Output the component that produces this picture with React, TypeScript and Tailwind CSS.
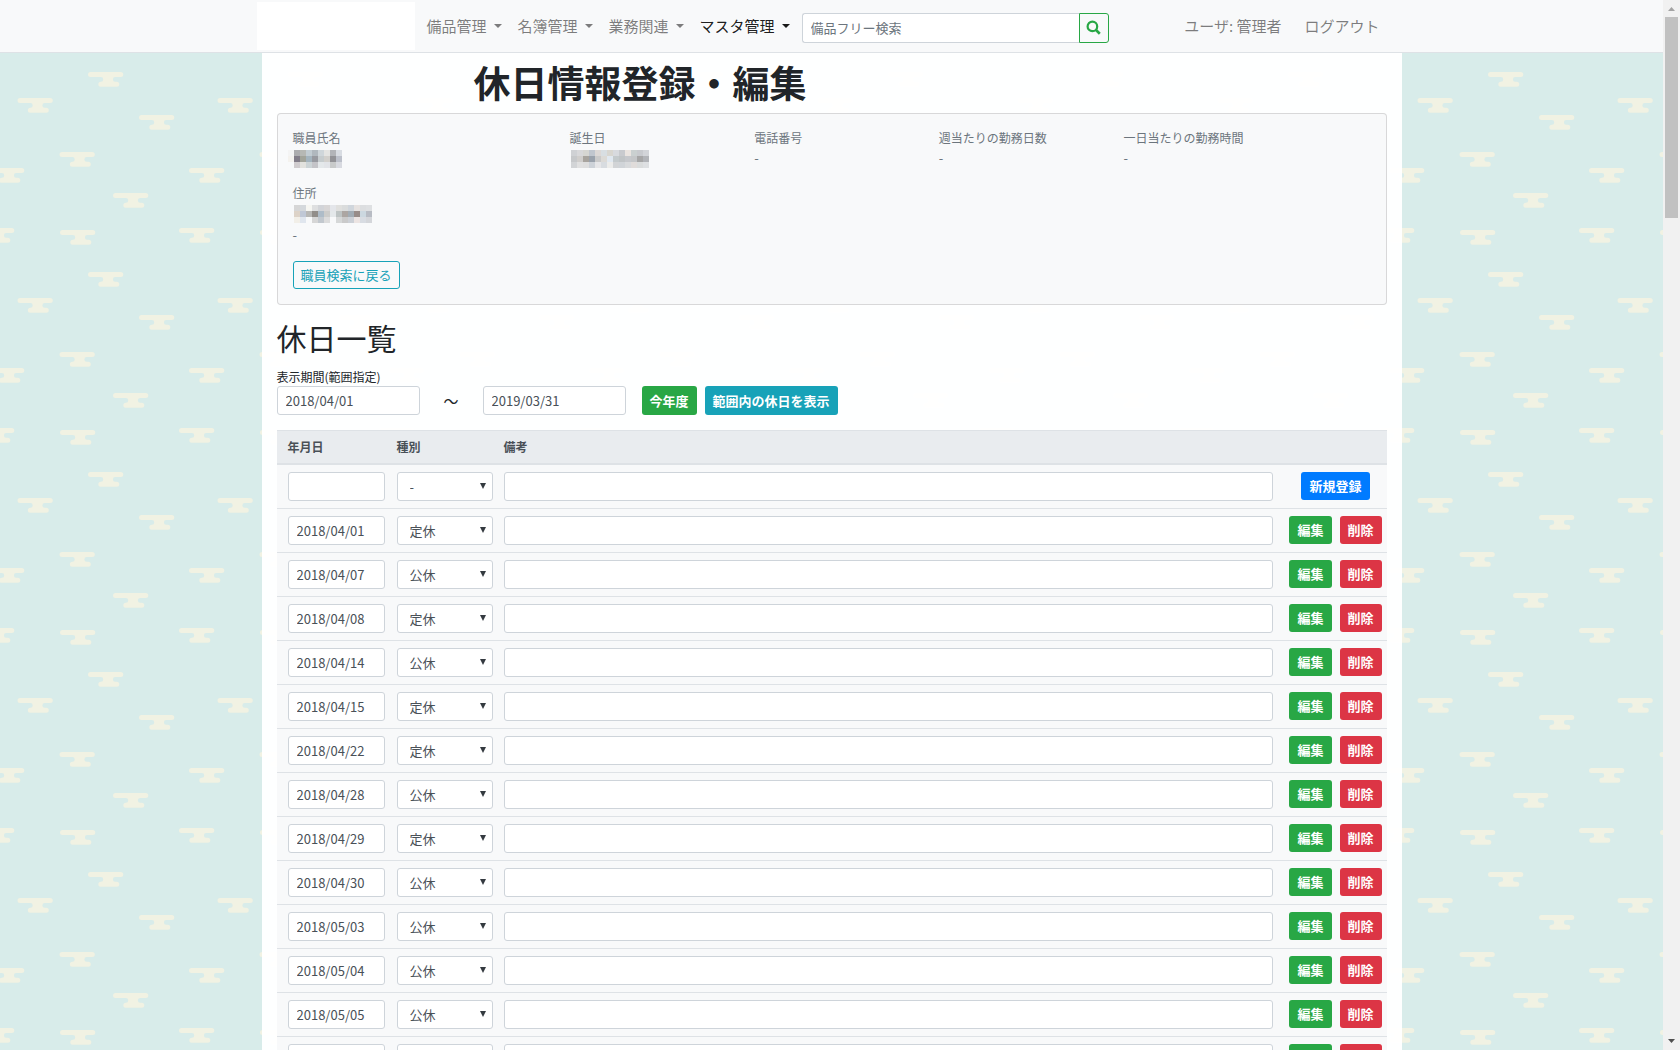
import type { ReactNode } from "react";

const clouds = [
  [88, 72],
  [17.5, 98],
  [139, 115],
  [59.5, 152],
  [189, 168],
  [-11, 168],
  [113, 193],
  [113, -7],
  [60, 30],
  [179, 28],
  [-21, 28],
];

const nameMosaic = [
  ["#f4f4f4", "#acacae", "#b6b8b4", "#c2ccd2", "#b0b8be", "#cfd6da", "#e4e4e2", "#b2b4b8", "#d8dce2"],
  ["#f4f2ee", "#827d88", "#a2a49a", "#a4b4be", "#989aa0", "#c6ccce", "#d2d0cc", "#929296", "#bcc0ca"],
  ["", "#d0ccce", "#e2e2de", "#ccd4d6", "#c4c4c8", "#e4e8ea", "#e2e4e8", "#c8caca", "#d8dae0"],
];

const birthMosaic = [
  ["#cfd1d4", "#d8d8da", "#d6d6d2", "#c0c6ce", "#dcd8d6", "#d8dee2", "#d8d6d0", "#d8dade", "#c8cace", "#eae4e0", "#cad0d0", "#c8cace", "#d2d4d8"],
  ["#c6c8ca", "#d0cecc", "#a8a49e", "#9aa2ac", "#cacaca", "#dcdad6", "#e0e8f0", "#c4cacc", "#c0c4c6", "#c6c8cc", "#c4c6c8", "#a6a6a6", "#b2b4b8"],
  ["#d2d4d6", "#e0e0e0", "#dedede", "#cdd2d8", "#e6e6e8", "#d8dce0", "#ececea", "#d2d4d6", "#d0d4d8", "#d8dadc", "#e0dcda", "#dadcdc", "#dee0e2"],
];

const addressMosaic = [
  ["#d6d6d6", "#d4d8dc", "#f6f6f2", "#dedfe0", "#d2d4d8", "#d8d6d6", "#e4e6ea", "#e0e0de", "#dadcdc", "#d0d6dc", "#e6e2e0", "#dcdee0", "#dee0e2"],
  ["#ddd3c8", "#c0c8d6", "#b8b8b6", "#928e8a", "#aebcc8", "#ccccca", "#e4e8ea", "#bec4c4", "#aca6a2", "#a2acb4", "#988c88", "#ccd8e0", "#b8bcc4"],
  ["#f2efe8", "#e0e6ee", "", "#d6d6d6", "#c2c8ce", "#dcdcdc", "", "#d6d8d8", "#cacaca", "#ccd0d6", "#ece4e2", "#d8dce2", "#d4d6da"],
];

const holidays = [
  { date: "2018/04/01", type: "定休" },
  { date: "2018/04/07", type: "公休" },
  { date: "2018/04/08", type: "定休" },
  { date: "2018/04/14", type: "公休" },
  { date: "2018/04/15", type: "定休" },
  { date: "2018/04/22", type: "定休" },
  { date: "2018/04/28", type: "公休" },
  { date: "2018/04/29", type: "定休" },
  { date: "2018/04/30", type: "公休" },
  { date: "2018/05/03", type: "公休" },
  { date: "2018/05/04", type: "公休" },
  { date: "2018/05/05", type: "公休" },
  { date: "2018/05/06", type: "定休" },
];

const fieldClass =
  "block w-full h-[29px] rounded-[3px] border border-[#ced4da] bg-white px-2 text-[13px] text-[#495057]";

function Background() {
  return (
    <svg className="absolute inset-0 w-full h-full" aria-hidden="true">
      <defs>
        <pattern id="clouds" width="200" height="200" patternUnits="userSpaceOnUse">
          <rect width="200" height="200" fill="#d8ecea" />
          {clouds.map(([x, y]) => (
            <path
              key={`${x}-${y}`}
              transform={`translate(${x} ${y})`}
              fill="#f1f2e3"
              d="M2.5 0h30.3a2.5 2.5 0 0 1 0 5h-5.5a2.4 2.4 0 0 0 0 4.8h1.5a2.5 2.5 0 0 1 0 5h-16a2.5 2.5 0 0 1 0-5h0a2.4 2.4 0 0 0 0-4.8h-10.3a2.5 2.5 0 0 1 0-5z"
            />
          ))}
        </pattern>
      </defs>
      <rect width="100%" height="100%" fill="url(#clouds)" />
    </svg>
  );
}

function NavMenu({ label, active }: { label: string; active?: boolean }) {
  return (
    <button
      type="button"
      className={`flex items-center gap-[7px] px-2 cursor-pointer ${
        active ? "text-black/90" : "text-black/50"
      }`}
    >
      {label}
      <span className="border-x-[4px] border-t-[4px] border-x-transparent border-t-current"></span>
    </button>
  );
}

function Mosaic({ rows, indent = 0 }: { rows: string[][]; indent?: number }) {
  return (
    <svg
      className="block mt-[3px] ml-px overflow-visible"
      width={rows[0].length * 6 - indent}
      height="18"
      shapeRendering="crispEdges"
      aria-hidden="true"
    >
      {rows.map((row, y) =>
        row.map((color, x) =>
          color ? (
            <rect key={`${x}-${y}`} x={x * 6 - indent} y={y * 6} width="6" height="6" fill={color} />
          ) : null
        )
      )}
    </svg>
  );
}

function Info({ label, className, children }: { label: string; className: string; children: ReactNode }) {
  return (
    <div className={`px-[15px] mb-4 ${className}`}>
      <div className="text-xs leading-[18px]">{label}</div>
      <div className="flow-root h-[21px] text-[13px] leading-[21px]">{children}</div>
    </div>
  );
}

function TypeSelect({ value }: { value: string }) {
  return (
    <div className="relative">
      <select
        aria-label="種別"
        defaultValue={value}
        className="block w-full h-[29px] appearance-none rounded-[3px] border border-[#ced4da] bg-white pl-3 text-[13px] text-[#495057]"
      >
        <option>-</option>
        <option>定休</option>
        <option>公休</option>
      </select>
      <svg
        className="absolute right-[7px] top-[11px] pointer-events-none"
        width="6"
        height="6"
        viewBox="0 0 6 6"
        fill="#343a40"
      >
        <path d="M0 0h6L3 6z" />
      </svg>
    </div>
  );
}

function Button({ className, children }: { className: string; children: ReactNode }) {
  return (
    <button
      type="button"
      className={`px-2 rounded-[3px] text-[13px] font-bold text-white whitespace-nowrap cursor-pointer ${className}`}
    >
      {children}
    </button>
  );
}

function Row({ date, type, children }: { date: string; type: string; children: ReactNode }) {
  return (
    <tr className="bg-[#f8f9fa]">
      <td className="py-[7px] pl-[11px] pr-[6px]">
        <input type="text" aria-label="年月日" defaultValue={date} className={fieldClass} />
      </td>
      <td className="py-[7px] px-[6px]">
        <TypeSelect value={type} />
      </td>
      <td className="py-[7px] pl-[5px] pr-[6px]">
        <input type="text" aria-label="備考" className={fieldClass} />
      </td>
      <td className="py-[7px] pl-[10px] pr-1">
        <div className="flex h-[29px] items-start justify-center gap-2">{children}</div>
      </td>
    </tr>
  );
}

function Navbar() {
  return (
    <header className="relative z-10 shrink-0 bg-[#f8f9fa] border-b border-[#dee2e6]">
      <div className="mx-auto max-w-[1150px] h-[52px] flex items-center text-[15px]">
        <a href="#" aria-label="ホーム" className="w-[158px] h-12 bg-white"></a>
        <nav className="flex ml-1 whitespace-nowrap">
          <NavMenu label="備品管理" />
          <NavMenu label="名簿管理" />
          <NavMenu label="業務関連" />
          <NavMenu label="マスタ管理" active />
        </nav>
        <form className="flex ml-1 mt-[3px]">
          <input
            type="text"
            aria-label="備品フリー検索"
            placeholder="備品フリー検索"
            className="w-[277px] h-[30px] rounded-l-[3px] border border-r-0 border-[#ced4da] bg-white px-2 text-[13px] placeholder:text-[#6c757d]"
          />
          <button
            type="button"
            aria-label="検索"
            className="flex w-[30px] h-[30px] items-center justify-center rounded-r-[3px] border border-[#28a745] text-[#28a745] cursor-pointer"
          >
            <svg width="15" height="15" viewBox="0 0 15 15" fill="none" stroke="currentColor">
              <circle cx="6.4" cy="6.4" r="4.8" strokeWidth="2.2" />
              <path d="M9.8 9.8l4 3.9" strokeWidth="2.6" />
            </svg>
          </button>
        </form>
        <div className="flex ml-auto gap-[23px] pr-[27px] text-black/50 whitespace-nowrap">
          <span>ユーザ: 管理者</span>
          <a href="#">ログアウト</a>
        </div>
      </div>
    </header>
  );
}

function Scrollbar() {
  return (
    <div className="flex flex-col w-[17px] shrink-0 items-center bg-[#f1f1f1]" aria-hidden="true">
      <svg width="17" height="17" viewBox="0 0 17 17" fill="#a3a3a3">
        <path d="M5 11h7l-3.5-4z" />
      </svg>
      <div className="w-[13px] h-[201px] bg-[#c1c1c1]"></div>
      <svg className="mt-auto" width="17" height="17" viewBox="0 0 17 17" fill="#505050">
        <path d="M5 6h7l-3.5 4z" />
      </svg>
    </div>
  );
}

export default function App() {
  return (
    <div className="flex h-screen text-[#212529] font-['Noto_Sans_CJK_JP',sans-serif]">
      <div className="relative flex flex-1 min-w-0 flex-col">
        <Background />
        <Navbar />

        <div className="relative flex-1 min-h-0 overflow-y-auto [scrollbar-width:none]">
          <main className="mx-auto max-w-[1140px] px-[15px] bg-white/97">
            <h1 className="pt-[7px] pl-[197px] text-[37px] leading-[45px] font-bold">
              休日情報登録・編集
            </h1>

            <section className="mt-2 px-[15px] pt-[15px] pb-[15px] rounded border border-black/13 bg-[#f8f9fa] text-[#6c757d]">
              <div className="grid grid-cols-12 -mx-[15px]">
                <Info label="職員氏名" className="col-span-3">
                  <Mosaic rows={nameMosaic} indent={6} />
                </Info>
                <Info label="誕生日" className="col-span-2">
                  <Mosaic rows={birthMosaic} />
                </Info>
                <Info label="電話番号" className="col-span-2">-</Info>
                <Info label="週当たりの勤務日数" className="col-span-2">-</Info>
                <Info label="一日当たりの勤務時間" className="col-span-3">-</Info>
              </div>
              <div className="text-xs leading-[18px]">住所</div>
              <div className="flow-root h-[22px]">
                <Mosaic rows={addressMosaic} />
              </div>
              <div className="text-[13px] leading-[21px]">-</div>
              <button
                type="button"
                className="block h-7 mt-4 px-[7px] rounded-[3px] border border-[#17a2b8] text-[13px] text-[#17a2b8] cursor-pointer"
              >
                職員検索に戻る
              </button>
            </section>

            <h2 className="mt-[14px] text-[30px] leading-9">休日一覧</h2>

            <form className="mt-[13px]">
              <label htmlFor="from" className="block text-xs leading-[18px]">
                表示期間(範囲指定)
              </label>
              <div className="flex items-center">
                <div className="w-[143px]">
                  <input id="from" type="text" defaultValue="2018/04/01" className={fieldClass} />
                </div>
                <span className="w-[63px] text-center text-[15px] leading-7">～</span>
                <div className="w-[143px]">
                  <input type="text" aria-label="終了日" defaultValue="2019/03/31" className={fieldClass} />
                </div>
                <Button className="ml-4 h-[29px] bg-[#28a745]">今年度</Button>
                <Button className="ml-2 h-[29px] bg-[#17a2b8]">範囲内の休日を表示</Button>
              </div>
            </form>

            <table className="mt-[15px] w-full table-fixed border-separate border-spacing-0 [&_td]:border-b [&_td]:border-[#dee2e6]">
              <colgroup>
                <col className="w-[114px]" />
                <col className="w-[108px]" />
                <col />
                <col className="w-[108px]" />
              </colgroup>
              <thead>
                <tr className="h-[35px] bg-[#e9ecef] text-left text-xs text-[#495057] [&>th]:border-t [&>th]:border-b-2 [&>th]:border-[#dee2e6]">
                  <th className="pl-[11px]">年月日</th>
                  <th className="pl-[6px]">種別</th>
                  <th className="pl-[5px]">備考</th>
                  <th></th>
                </tr>
              </thead>
              <tbody>
                <Row date="" type="-">
                  <Button className="h-7 bg-[#007bff]">新規登録</Button>
                </Row>
                {holidays.map((holiday) => (
                  <Row key={holiday.date} date={holiday.date} type={holiday.type}>
                    <Button className="h-7 bg-[#28a745]">編集</Button>
                    <Button className="h-7 bg-[#dc3545]">削除</Button>
                  </Row>
                ))}
              </tbody>
            </table>
          </main>
        </div>
      </div>
      <Scrollbar />
    </div>
  );
}
